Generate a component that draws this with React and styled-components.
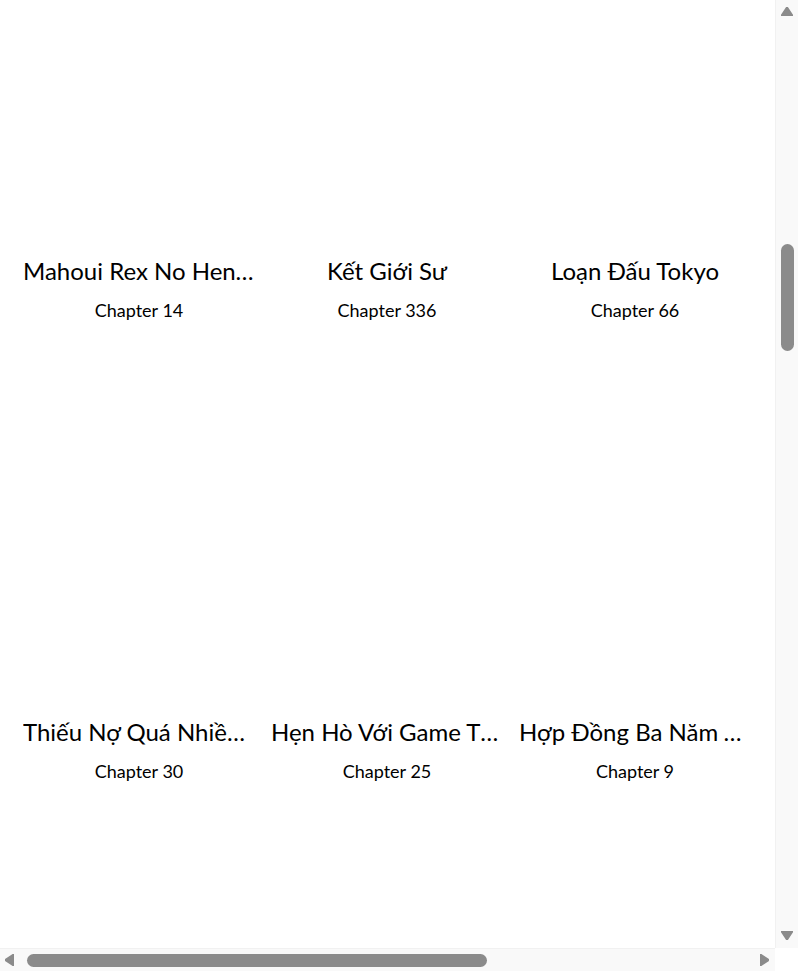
import React, { useLayoutEffect } from "react";
import styled, { createGlobalStyle } from "styled-components";

const GlobalStyle = createGlobalStyle`
  html, body {
    margin: 0;
    padding: 0;
    background: #fff;
  }
  body {
    font-family: "Lato", "Noto Sans", "DejaVu Sans", sans-serif;
    color: #000;
  }
`;

const TopBar = styled.header`
  height: 131px;
`;

const Grid = styled.section`
  display: grid;
  grid-template-columns: repeat(3, 248px);
  margin-left: 15px;
`;

const Card = styled.div`
  display: flex;
  flex-direction: column;
  align-items: center;
  min-width: 0;
  padding: 0 8px 20px;
`;

const Cover = styled.div`
  width: 100%;
  height: 360px;
`;

const Title = styled.h3`
  margin: 14px 0 0;
  width: 100%;
  font-size: 24px;
  font-weight: 400;
  line-height: 32px;
  text-align: center;
  white-space: nowrap;
  overflow: hidden;
  text-overflow: ellipsis;
`;

const Chapter = styled.p`
  margin: 11px 0 0;
  font-size: 18px;
  line-height: 24px;
`;

// fake window scrollbars (the real ones are not painted in the capture)
const VBar = styled.div`
  position: fixed;
  top: 0;
  right: 0;
  width: 23px;
  height: 948px;
  background: #f9f9f9;
  border-left: 1px solid #f1f1f1;
  box-sizing: border-box;
  display: flex;
  flex-direction: column;
  align-items: center;
`;

const HBar = styled.div`
  position: fixed;
  left: 0;
  bottom: 0;
  width: 775px;
  height: 23px;
  background: #f9f9f9;
  border-top: 1px solid #f1f1f1;
  box-sizing: border-box;
  display: flex;
  align-items: center;
`;

const Corner = styled.div`
  position: fixed;
  right: 0;
  bottom: 0;
  width: 23px;
  height: 23px;
  background: #fff;
`;

const Thumb = styled.div`
  background: #8b8b8b;
  border-radius: 7px;
  flex: none;
  width: ${(p) => (p.$vertical ? "13px" : `${p.$size}px`)};
  height: ${(p) => (p.$vertical ? `${p.$size}px` : "13px")};
  margin-${(p) => (p.$vertical ? "top" : "left")}: ${(p) => p.$offset}px;
`;

const Spacer = styled.div`
  flex: 1;
`;

const Arrow = styled.svg`
  flex: none;
  display: block;
  margin: ${(p) => p.$margin};
`;

const arrows = {
  up: { w: 12, h: 9, d: "M6 0 L12 9 L0 9 Z" },
  down: { w: 12, h: 9, d: "M0 0 L12 0 L6 9 Z" },
  left: { w: 9, h: 12, d: "M9 0 L9 12 L0 6 Z" },
  right: { w: 9, h: 12, d: "M0 0 L9 6 L0 12 Z" },
};

const ArrowIcon = ({ dir, margin }) => {
  const a = arrows[dir];
  return (
    <Arrow width={a.w} height={a.h} viewBox={`0 0 ${a.w} ${a.h}`} $margin={margin}>
      <path d={a.d} fill="#8b8b8b" strokeLinejoin="round" stroke="#8b8b8b" strokeWidth="1.5" />
    </Arrow>
  );
};

const known = [
  ["Mahoui Rex No Hentai Dairi", 14],
  ["Kết Giới Sư", 336],
  ["Loạn Đấu Tokyo", 66],
  ["Thiếu Nợ Quá Nhiều, Tôi Đành Làm Ma Vương", 30],
  ["Hẹn Hò Với Game Thủ Hàng Đầu", 25],
  ["Hợp Đồng Ba Năm Với Sếp", 9],
];

const filler = [
  ["Tôi Là Kiếm Sĩ", 48],
  ["Thần Điêu Đại Hiệp", 120],
  ["Vua Bóng Đá", 212],
  ["Học Viện Anh Hùng", 402],
  ["Thám Tử Lừng Danh", 1080],
  ["Đảo Hải Tặc", 1095],
];

// 4 rows above the visible ones, then the visible ones, then the rest
const comics = [];
for (let i = 0; i < 12; i++) comics.push(filler[i % filler.length]);
known.forEach((c) => comics.push(c));
for (let i = 0; i < 36; i++) comics.push(filler[(i + 3) % filler.length]);

export default function App() {
  useLayoutEffect(() => {
    window.scrollTo(0, 2094);
  }, []);

  return (
    <>
      <GlobalStyle />
      <div>
        <TopBar />
        <Grid>
          {comics.map(([name, ch], i) => (
            <Card key={i}>
              <Cover />
              <Title>{name}</Title>
              <Chapter>Chapter {ch}</Chapter>
            </Card>
          ))}
        </Grid>
      </div>
      <VBar>
        <ArrowIcon dir="up" margin="7px 0 0" />
        <Thumb $vertical $size={107} $offset={228} />
        <Spacer />
        <ArrowIcon dir="down" margin="0 0 8px" />
      </VBar>
      <HBar>
        <ArrowIcon dir="left" margin="0 0 0 5px" />
        <Thumb $size={460} $offset={13} />
        <Spacer />
        <ArrowIcon dir="right" margin="0 6px 0 0" />
      </HBar>
      <Corner />
    </>
  );
}
